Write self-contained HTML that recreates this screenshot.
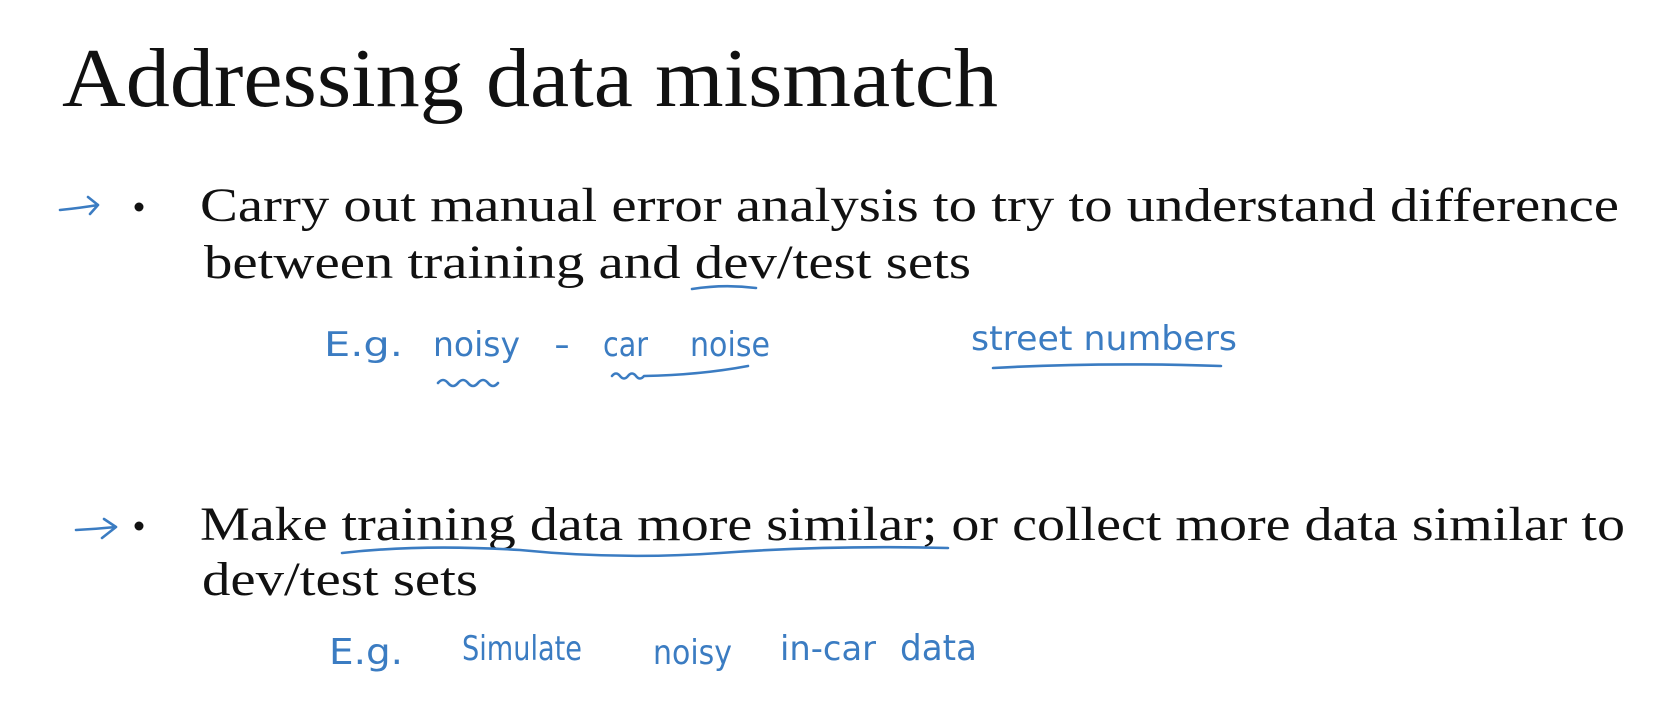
<!DOCTYPE html>
<html><head><meta charset="utf-8"><style>
html,body{margin:0;padding:0;background:#fff;}
svg{display:block}
</style></head><body>
<svg width="1656" height="728" viewBox="0 0 1656 728" xmlns="http://www.w3.org/2000/svg">
<rect width="1656" height="728" fill="#fff"/>
<g font-family="Liberation Serif, serif" fill="#111">
<text x="62" y="106" font-size="84" textLength="936" lengthAdjust="spacingAndGlyphs">Addressing data mismatch</text>
<text x="200" y="221" font-size="48" textLength="1419" lengthAdjust="spacingAndGlyphs">Carry out manual error analysis to try to understand difference</text>
<text x="204" y="278" font-size="48" textLength="767" lengthAdjust="spacingAndGlyphs">between training and dev/test sets</text>
<text x="200" y="540" font-size="48" textLength="1425" lengthAdjust="spacingAndGlyphs">Make training data more similar; or collect more data similar to</text>
<text x="202" y="595" font-size="48" textLength="276" lengthAdjust="spacingAndGlyphs">dev/test sets</text>
</g>
<circle cx="139" cy="207" r="4.5" fill="#111"/>
<circle cx="139" cy="526" r="4.5" fill="#111"/>
<g stroke="#3b7cc2" stroke-width="2.6" fill="none" stroke-linecap="round" stroke-linejoin="round">
<!-- arrows -->
<path d="M60 210 Q80 208 98 205 M88 197 L98 205 L90 214"/>
<path d="M76 530 Q96 529 116 527 M104 519 L116 527 L102 538"/>
<!-- underlines -->
<path d="M692 289 Q724 284 756 288"/>
<path d="M342 553 Q420 544 520 550 Q620 560 720 553 Q830 545 948 548"/>
<path d="M438 383 q5 -6 10 0 q5 6 10 0 q5 -6 10 0 q5 6 10 0 q5 -6 10 0 q5 6 10 0"/>
<path d="M612 376 q4 -5 8 0 q4 5 8 0 q4 -5 8 0 q4 5 8 0 Q700 375 748 366"/>
<path d="M993 368 Q1100 362 1221 366"/>
</g>
<g font-family="DejaVu Sans, sans-serif" fill="#3b7cc2" font-weight="normal">
<text x="324" y="356" font-size="34" textLength="79" lengthAdjust="spacingAndGlyphs">E.g.</text>
<text x="433" y="356" font-size="34" textLength="87" lengthAdjust="spacingAndGlyphs">noisy</text>
<text x="554" y="356" font-size="34" textLength="16" lengthAdjust="spacingAndGlyphs">-</text>
<text x="603" y="356" font-size="34" textLength="45" lengthAdjust="spacingAndGlyphs">car</text>
<text x="690" y="356" font-size="34" textLength="80" lengthAdjust="spacingAndGlyphs">noise</text>
<text x="971" y="350" font-size="34" textLength="266" lengthAdjust="spacingAndGlyphs">street numbers</text>
<text x="329" y="664" font-size="36" textLength="74" lengthAdjust="spacingAndGlyphs">E.g.</text>
<text x="462" y="660" font-size="34" textLength="120" lengthAdjust="spacingAndGlyphs">Simulate</text>
<text x="653" y="664" font-size="34" textLength="79" lengthAdjust="spacingAndGlyphs">noisy</text>
<text x="780" y="660" font-size="34" textLength="96" lengthAdjust="spacingAndGlyphs">in-car</text>
<text x="900" y="660" font-size="36" textLength="77" lengthAdjust="spacingAndGlyphs">data</text>
</g>
</svg>
</body></html>
